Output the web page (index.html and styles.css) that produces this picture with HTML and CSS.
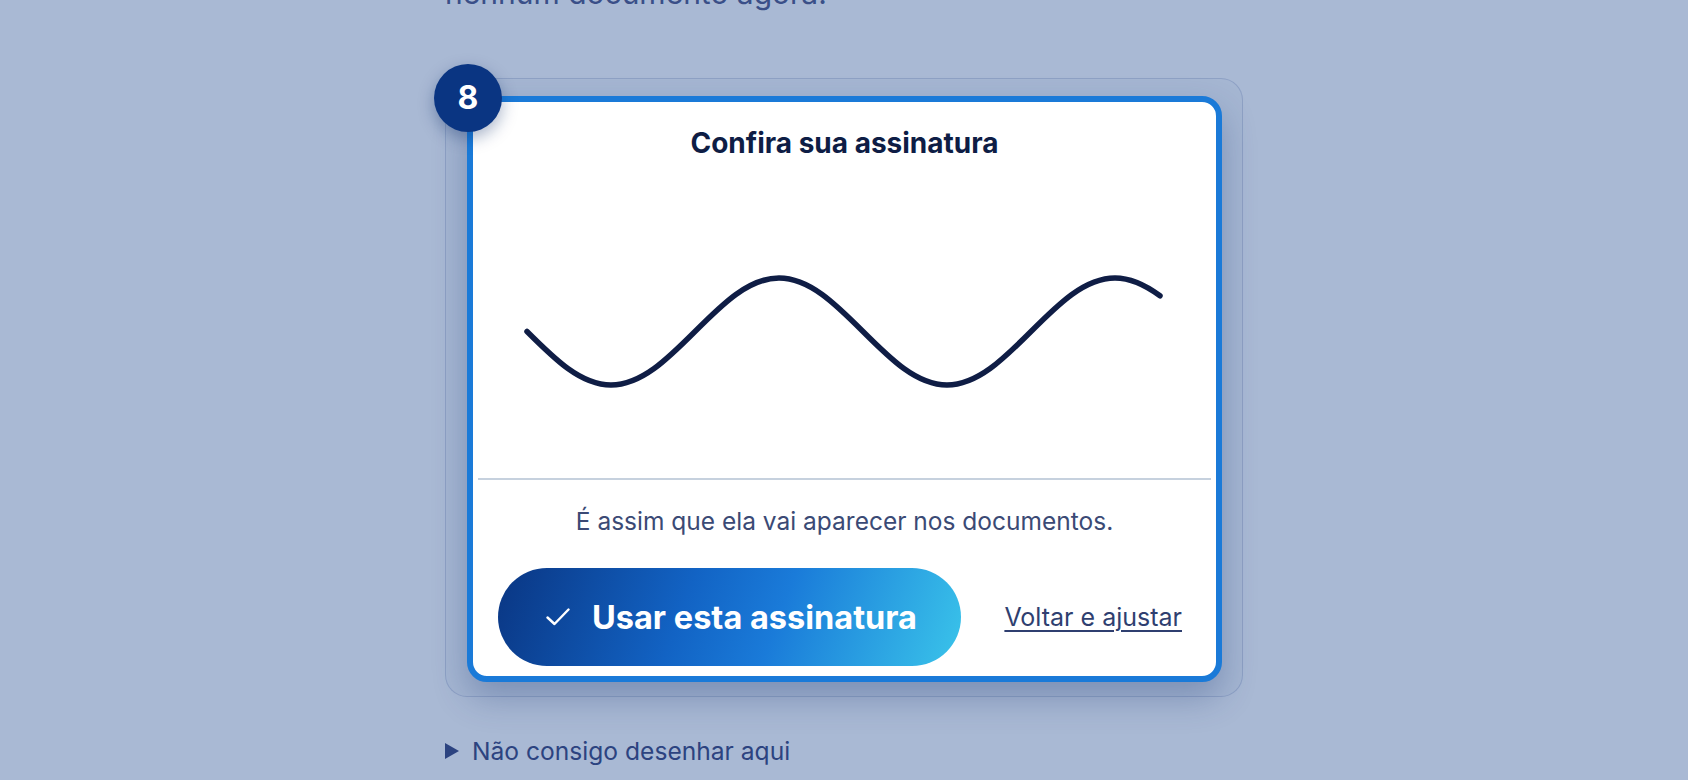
FILE: index.html
```html
<!DOCTYPE html>
<html lang="pt-BR">
<head>
<meta charset="utf-8">
<title>Confira sua assinatura</title>
<link rel="stylesheet" href="styles.css">
</head>
<body>
<main class="page">
  <p class="lead">nenhum documento agora.</p>
  <section class="frame">
    <div class="card">
      <span class="badge">8</span>
      <div class="canvas">
        <h2 class="title">Confira sua assinatura</h2>
        <svg class="sig" width="733" height="318" viewBox="478 160 733 318" aria-hidden="true">
          <path d="M527 331.5 c27.4 27.4 53.6 53.5 84 53.5 c30.4 0 56.6 -26.1 84 -53.5 c27.4 -27.4 53.6 -53.5 84 -53.5 c30.4 0 56.6 26.1 84 53.5 c27.4 27.4 53.6 53.5 84 53.5 c30.4 0 56.6 -26.1 84 -53.5 c27.4 -27.4 53.6 -53.5 84 -53.5 c16 0 31 7.5 45 17.8" fill="none" stroke="#0f1d45" stroke-width="5.5" stroke-linecap="round" stroke-linejoin="round"/>
        </svg>
      </div>
      <p class="hint">É assim que ela vai aparecer nos documentos.</p>
      <div class="actions">
        <button class="primary" type="button">
          <svg class="check" width="24" height="18" viewBox="0 0 24 18" aria-hidden="true"><path d="M1.5 9.5 L8.5 16 L22.5 1.5" fill="none" stroke="#fff" stroke-width="2.4" stroke-linecap="round" stroke-linejoin="round"/></svg>
          <span>Usar esta assinatura</span>
        </button>
        <a class="link" href="#">Voltar e ajustar</a>
      </div>
    </div>
  </section>
  <details class="help"><summary>Não consigo desenhar aqui</summary></details>
</main>
</body>
</html>
```
FILE: styles.css
```css
html, body {
  margin: 0;
  padding: 0;
}
body {
  background: #a9b9d4;
  font-family: Inter, "Noto Sans", "Liberation Sans", sans-serif;
  overflow: hidden;
  height: 780px;
}
.page {
  width: 798px;
  margin: 0 auto;
}
.lead {
  margin: -27px 0 0;
  font-size: 30px;
  line-height: 40px;
  color: #3a4f88;
}
.frame {
  margin-top: 65px;
  border: 1px solid rgba(60, 88, 150, 0.22);
  border-radius: 22px;
  background: rgba(60, 90, 150, 0.03);
  padding: 17px 20px 14px 21px;
}
.card {
  position: relative;
  background: #fff;
  border: 6px solid #1a7ad8;
  border-radius: 20px;
  box-shadow: 0 16px 34px rgba(30, 55, 115, 0.3);
}
.badge {
  position: absolute;
  left: -39px;
  top: -38px;
  width: 68px;
  height: 68px;
  border-radius: 50%;
  background: #0a3582;
  color: #fff;
  font-weight: 700;
  font-size: 32px;
  line-height: 68px;
  text-align: center;
  box-shadow: 0 6px 16px rgba(10, 40, 100, 0.35);
}
.canvas {
  margin: 0 5px;
  border-bottom: 2px solid #c6d1de;
}
.title {
  margin: 0;
  padding-top: 24px;
  font-size: 28px;
  line-height: 34px;
  font-weight: 700;
  text-align: center;
  color: #0e1d45;
}
.sig {
  display: block;
}
.hint {
  margin: 26px 0 0;
  font-size: 24.5px;
  line-height: 30px;
  text-align: center;
  color: #3b4a75;
}
.actions {
  display: flex;
  align-items: center;
  justify-content: space-between;
  margin-top: 32px;
  padding: 0 34px 10px 25px;
}
.primary {
  display: flex;
  align-items: center;
  justify-content: center;
  gap: 22px;
  width: 463px;
  height: 98px;
  border: 0;
  border-radius: 49px;
  background: linear-gradient(110deg, #0a3683 0%, #1263c4 40%, #1a7bd9 60%, #3ac4ea 100%);
  color: #fff;
  font-family: inherit;
  font-weight: 700;
  font-size: 32.5px;
  padding: 0 0 0 4px;
}
.check {
  display: block;
}
.link {
  font-size: 25px;
  color: #2f3f70;
  text-decoration: underline;
  text-decoration-thickness: 2px;
  text-underline-offset: 4px;
}
.help {
  margin-top: 38px;
}
.help summary {
  list-style: none;
  display: flex;
  align-items: center;
  gap: 13px;
  font-size: 24.6px;
  line-height: 32px;
  color: #2c4380;
}
.help summary::-webkit-details-marker {
  display: none;
}
.help summary::before {
  content: "";
  width: 0;
  height: 0;
  border-top: 8px solid transparent;
  border-bottom: 8px solid transparent;
  border-left: 14px solid #2c4380;
}
```
